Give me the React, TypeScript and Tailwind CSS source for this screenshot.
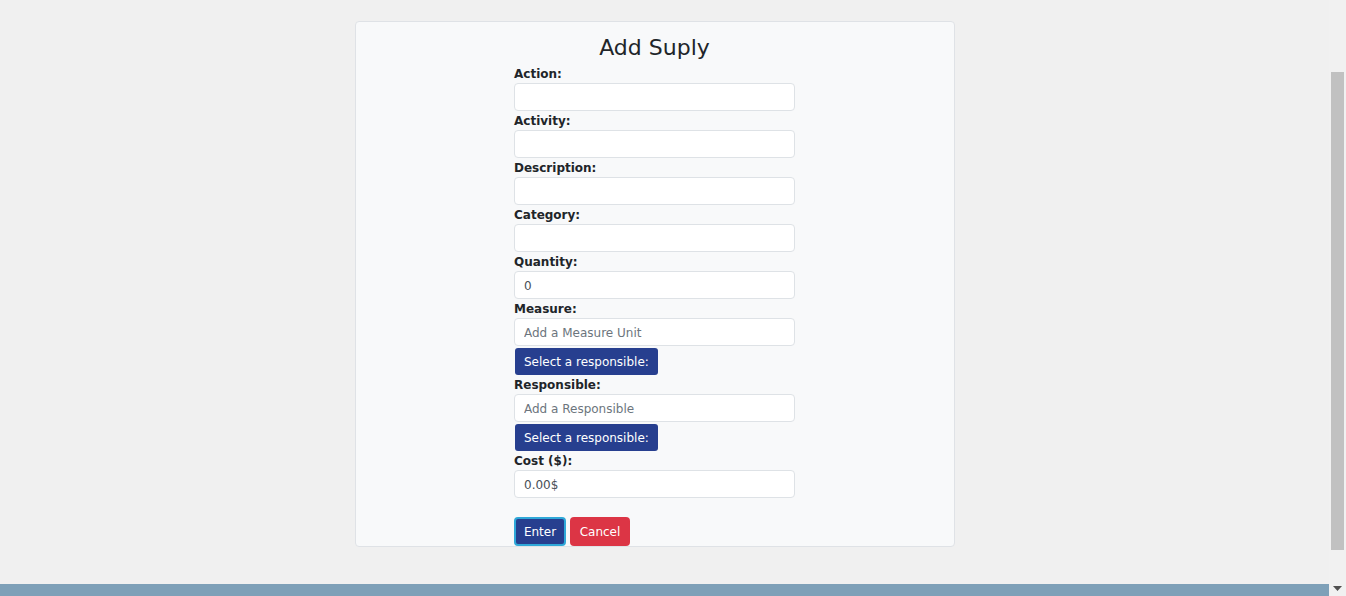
const Field = ({ label, placeholder, value }: { label: string; placeholder?: string; value?: string }) => (
  <>
    <label className="block h-[19px] pt-[2px] text-[12px] font-bold leading-[17px] text-[#212529]">{label}</label>
    <input
      className="block h-[28px] w-[281px] rounded-[4px] border border-[#dee2e6] bg-white px-[9px] pt-[2px] text-[12px] text-[#495057] placeholder:text-[#6c757d] outline-none"
      placeholder={placeholder}
      defaultValue={value}
    />
  </>
)

const SelectButton = () => (
  <button className="ml-[1px] mt-[2px] block h-[27px] rounded-[3px] bg-[#273f8f] px-[9px] text-[12px] text-white">
    Select a responsible:
  </button>
)

export default function App() {
  return (
    <div className="flex h-[596px] w-[1346px] overflow-hidden bg-[#f0f0f0] font-['DejaVu_Sans',sans-serif]">
      <div className="flex flex-1 flex-col">
        <div className="flex-1">
          <div className="ml-[355px] mt-[21px] h-[526px] w-[600px] rounded-[4px] border border-[#dfe2e6] bg-[#f8f9fa]">
            <div className="ml-[158px] w-[281px]">
              <h1 className="mt-[10px] h-[32px] text-center text-[22px] leading-[32px] text-[#212529]">Add Suply</h1>
              <Field label="Action:" />
              <Field label="Activity:" />
              <Field label="Description:" />
              <Field label="Category:" />
              <Field label="Quantity:" value="0" />
              <Field label="Measure:" placeholder="Add a Measure Unit" />
              <SelectButton />
              <Field label="Responsible:" placeholder="Add a Responsible" />
              <SelectButton />
              <Field label="Cost ($):" value="0.00$" />
              <div className="mt-[19px] flex gap-[4px]">
                <button className="h-[29px] w-[52px] rounded-[4px] border-2 border-[#2fa8d8] bg-[#273f8f] text-[12px] text-white">
                  Enter
                </button>
                <button className="h-[29px] w-[60px] rounded-[4px] bg-[#dc3545] text-[12px] text-white">Cancel</button>
              </div>
            </div>
          </div>
        </div>
        <div className="h-[12px] bg-[#7ea0b8]" />
      </div>
      <div className="relative w-[17px] bg-[#f1f1f1]">
        <div className="absolute left-[2px] top-[72px] h-[478px] w-[13px] bg-[#c1c1c1]" />
        <svg className="absolute bottom-[4px] left-[4px]" width="9" height="6" viewBox="0 0 9 6">
          <path d="M0 0h9L4.5 5z" fill="#505050" />
        </svg>
      </div>
    </div>
  )
}
